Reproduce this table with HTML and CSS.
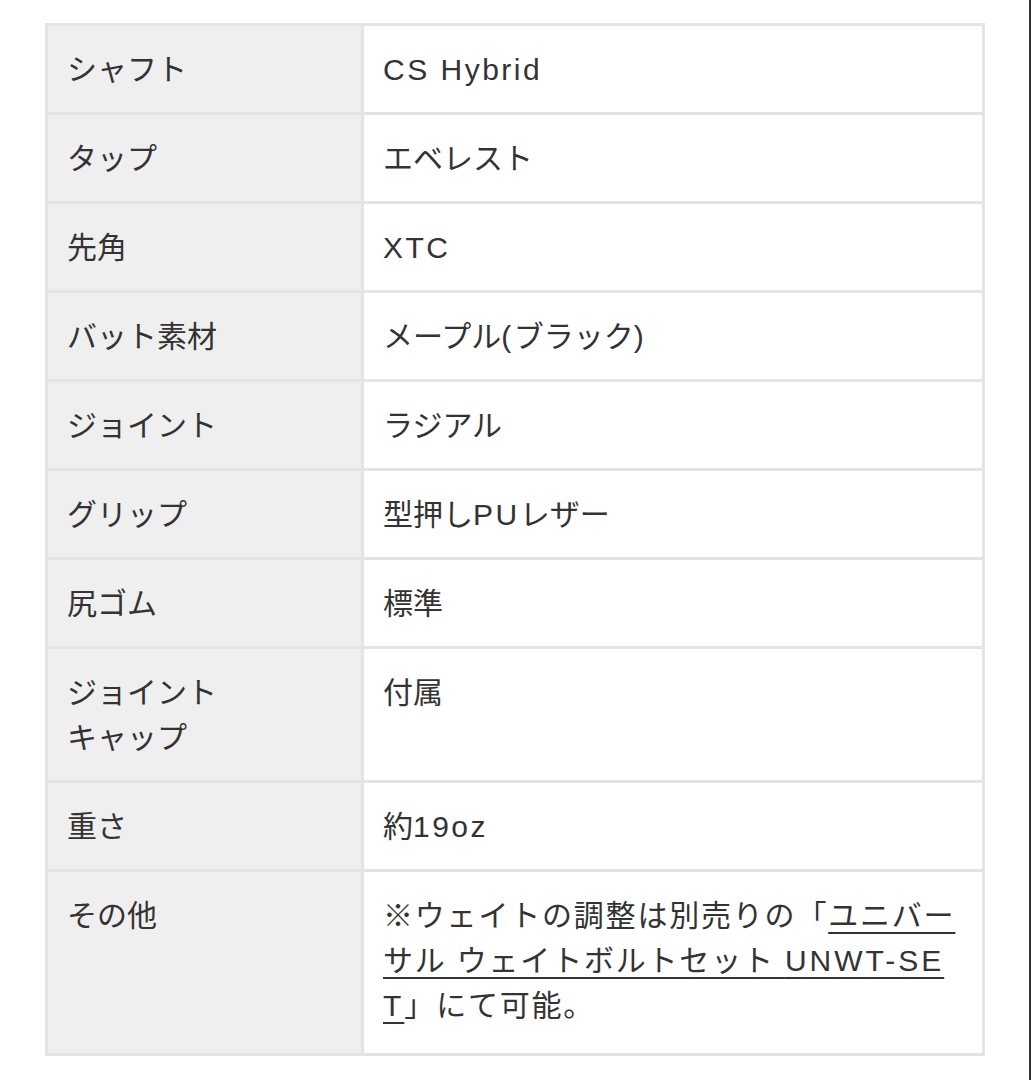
FILE: index.html
```
<!DOCTYPE html>
<html lang="ja">
<head>
<meta charset="utf-8">
<title>スペック</title>
<link rel="stylesheet" href="styles.css">
</head>
<body>
<div class="page">
  <table class="spec">
    <tbody>
      <tr><th>シャフト</th><td><span class="en">CS Hybrid</span></td></tr>
      <tr><th>タップ</th><td>エベレスト</td></tr>
      <tr><th>先角</th><td><span class="en">XTC</span></td></tr>
      <tr><th>バット素材</th><td>メープル<span class="en">(</span>ブラック<span class="en">)</span></td></tr>
      <tr><th>ジョイント</th><td>ラジアル</td></tr>
      <tr><th>グリップ</th><td>型押し<span class="en">PU</span>レザー</td></tr>
      <tr><th>尻ゴム</th><td>標準</td></tr>
      <tr><th>ジョイント<br>キャップ</th><td>付属</td></tr>
      <tr><th>重さ</th><td>約<span class="en">19oz</span></td></tr>
      <tr><th>その他</th><td class="note">※ウェイトの調整は別売りの「<a href="#" class="link">ユニバーサル ウェイトボルトセット <span class="en">UNWT-SET</span></a>」にて可能。</td></tr>
    </tbody>
  </table>
</div>
</body>
</html>
```
FILE: styles.css
```
html, body {
  margin: 0;
  padding: 0;
  background: #ffffff;
}

.page {
  box-sizing: border-box;
  min-height: 100vh;
  padding: 23px 46px 20px 45px;
  border-right: 2px solid #333333;
  font-family: "Liberation Sans", "Noto Sans CJK JP", sans-serif;
  font-size: 30px;
  line-height: 45px;
  color: #333333;
}

.spec {
  width: 940px;
  table-layout: fixed;
  border-collapse: separate;
  border-spacing: 0;
  border-top: 3px solid #e4e4e4;
  border-left: 3px solid #e4e4e4;
}

.spec th,
.spec td {
  box-sizing: border-box;
  padding: 21px 20px 20px 19px;
  border-right: 3px solid #e4e4e4;
  border-bottom: 3px solid #e4e4e4;
  vertical-align: top;
  text-align: left;
  font-weight: 400;
  letter-spacing: 0;
}

.spec th {
  width: 316px;
  background: #efefef;
}

.spec td {
  background: #ffffff;
}

.en {
  letter-spacing: 2.5px;
}

.spec td.note {
  word-break: break-all;
  letter-spacing: 1.8px;
  padding-bottom: 25px;
}

.spec td.note .en {
  letter-spacing: 3px;
}

.link {
  color: #333333;
  text-decoration: underline;
  text-decoration-thickness: 2px;
  text-underline-offset: 6px;
}
```
